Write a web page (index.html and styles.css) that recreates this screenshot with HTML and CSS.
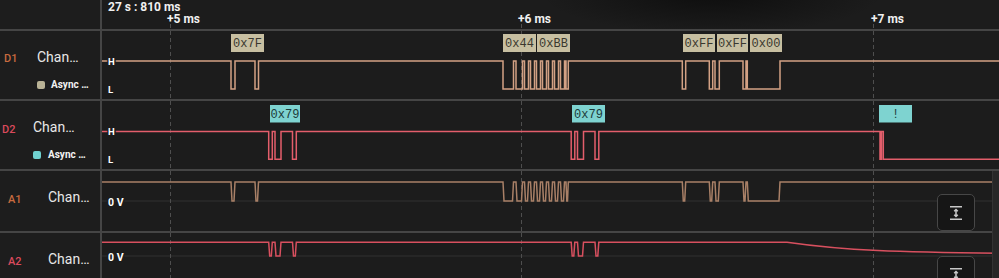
FILE: index.html
```html
<!DOCTYPE html>
<html lang="en">
<head>
  <meta charset="UTF-8" />
  <title>Logic capture</title>
  <link rel="stylesheet" href="styles.css">
</head>
<body>
  <div class="scope">

    <div class="row header">
      <div class="side"></div>
      <div class="plot">
        <svg viewBox="102 0 897 29">
          <text class="stamp" x="108" y="10.5">27 s : 810 ms</text>
          <text class="tick" x="167" y="23.3">+5 ms</text>
          <text class="tick" x="518" y="23.3">+6 ms</text>
          <text class="tick" x="871" y="23.3">+7 ms</text>
          <path class="grid" d="M170.5 24V29M521.5 24V29M873.5 24V29" />
        </svg>
      </div>
    </div>

    <div class="row digital">
      <div class="side">
        <span class="id tan">D1</span>
        <div class="name">
          <span class="title">Chan…</span>
          <span class="proto"><i class="swatch beige"></i>Async …</span>
        </div>
      </div>
      <div class="plot">
        <svg viewBox="102 0 897 68">
          <path class="grid" d="M170.5 0V68M521.5 0V68M873.5 0V68" />
          <path class="trace tan" d="M102 30H231V58H235V30H255V58H258.5V30H503V58H513.5V30H516V58H522.5V30H524.5V58H528.5V30H530.5V58H534.5V30H536.5V58H540.5V30H542.5V58H546.5V30H548.5V58H552.5V30H554.5V58H558.5V30H560.5V58H564.5V30H566V58H568.3V30H682.3V58H685.7V30H709.3V58H712.7V30H715V58H719.3V30H743V58H746V30H747.3V58H780V30H999" />
          <g class="tag">
            <rect x="231" y="3" width="33" height="18" /><text x="247.5" y="16.3">0x7F</text>
            <rect x="503" y="3" width="33" height="18" /><text x="519.5" y="16.3">0x44</text>
            <rect x="537" y="3" width="33" height="18" /><text x="553.5" y="16.3">0xBB</text>
            <rect x="683" y="3" width="32" height="18" /><text x="699" y="16.3">0xFF</text>
            <rect x="717" y="3" width="31" height="18" /><text x="732.5" y="16.3">0xFF</text>
            <rect x="750" y="3" width="32" height="18" /><text x="766" y="16.3">0x00</text>
          </g>
          <text class="level" x="108" y="33.5">H</text>
          <text class="level" x="108" y="61.5">L</text>
        </svg>
      </div>
    </div>

    <div class="row digital second">
      <div class="side">
        <span class="id pink">D2</span>
        <div class="name">
          <span class="title">Chan…</span>
          <span class="proto"><i class="swatch teal"></i>Async …</span>
        </div>
      </div>
      <div class="plot">
        <svg viewBox="102 0 897 68">
          <path class="grid" d="M170.5 0V68M521.5 0V68M873.5 0V68" />
          <path class="trace pink" d="M102 30.5H268.7V58.3H272.3V30.5H275V58.3H281V30.5H292.5V58.3H296.3V30.5H571.2V58.3H574.8V30.5H577.5V58.3H583.5V30.5H595V58.3H598.8V30.5H880V58.3H881.5V30.5H883.3V58.3H999" />
          <g class="tag teal">
            <rect x="270" y="4" width="30" height="17.5" /><text x="285" y="17">0x79</text>
            <rect x="572" y="4" width="33" height="17.5" /><text x="588.5" y="17">0x79</text>
            <rect x="879" y="4" width="33" height="17.5" /><text x="895.5" y="17">!</text>
          </g>
          <text class="level" x="108" y="33.5">H</text>
          <text class="level" x="108" y="62">L</text>
        </svg>
      </div>
    </div>

    <div class="row analog">
      <div class="side">
        <span class="id tan">A1</span>
        <div class="name"><span class="title">Chan…</span></div>
      </div>
      <div class="plot">
        <svg viewBox="102 0 897 60">
          <path class="zero" d="M102 30H999" />
          <path class="grid" d="M170.5 0V60M521.5 0V60M873.5 0V60" />
          <path class="trace brown" d="M102 11H231L232 30H234L235 11H255L256 30H257.5L258.5 11H503L504 30H512.5L513.5 11H516L517 30H521.5L522.5 11H524.5L525.5 30H527.5L528.5 11H530.5L531.5 30H533.5L534.5 11H536.5L537.5 30H539.5L540.5 11H542.5L543.5 30H545.5L546.5 11H548.5L549.5 30H551.5L552.5 11H554.5L555.5 30H557.5L558.5 11H560.5L561.5 30H563.5L564.5 11H566L566.8 30H567.5L568.3 11H682.3L683.3 30H684.7L685.7 11H709.3L710.3 30H711.7L712.7 11H715L716 30H718.3L719.3 11H743L744 30H745L746 11H747.3L748.3 30H779L780 11H999" />
          <text class="level" x="108" y="34.5">0 V</text>
        </svg>
        <button class="fit" title="Fit to height">
          <svg viewBox="0 0 12 14" width="12" height="14"><path d="M0 0.75H12M0 13.25H12M6 3.5V10.5M4.2 5.3L6 3.5L7.8 5.3M4.2 8.7L6 10.5L7.8 8.7" /></svg>
        </button>
      </div>
    </div>

    <div class="row analog">
      <div class="side">
        <span class="id pink">A2</span>
        <div class="name"><span class="title">Chan…</span></div>
      </div>
      <div class="plot">
        <svg viewBox="102 0 897 60">
          <path class="zero" d="M102 23H999" />
          <path class="grid" d="M170.5 0V60M521.5 0V60M873.5 0V60" />
          <path class="trace red" d="M102 9.3H268.7L269.7 23H271.3L272.3 9.3H275L276 23H280L281 9.3H292.5L293.5 23H295.3L296.3 9.3H571.2L572.2 23H573.8L574.8 9.3H577.5L578.5 23H582.5L583.5 9.3H595L596 23H597.8L598.8 9.3H787C847 17.9 899 19.2 999 20.3" />
          <text class="level" x="108" y="27.5">0 V</text>
        </svg>
        <button class="fit" title="Fit to height">
          <svg viewBox="0 0 12 14" width="12" height="14"><path d="M0 0.75H12M0 13.25H12M6 3.5V10.5M4.2 5.3L6 3.5L7.8 5.3M4.2 8.7L6 10.5L7.8 8.7" /></svg>
        </button>
      </div>
    </div>

  </div>
</body>
</html>
```

FILE: styles.css
```css
body {
  margin: 0;
  background-color: #1c1c1c;
  color: #e6e6e6;
  font-family: Roboto, "Liberation Sans", sans-serif;
  overflow: hidden;
}
.scope {
  width: 999px;
  height: 278px;
  overflow: hidden;
}
.row {
  display: flex;
  border-bottom: 2px solid #454545;
}
.header {
  height: 29px;
}
.digital {
  height: 68px;
}
.analog {
  height: 60px;
  position: relative;
}
.analog::after {
  content: "";
  position: absolute;
  top: 0;
  right: 0;
  bottom: -2px;
  width: 6px;
  background-color: #272727;
  border-left: 1px solid #333;
}
.side {
  width: 102px;
  flex: none;
  display: flex;
  align-items: flex-start;
  padding-left: 4px;
  box-sizing: border-box;
  border-right: 2px solid #454545;
  background-color: #1d1d1d;
}
.plot {
  flex: 1;
  position: relative;
}
.plot > svg {
  display: block;
  width: 897px;
  height: 100%;
}
.header .plot {
  background: radial-gradient(ellipse 170px 40px at 610px -6px, #0e0e0e, rgba(14, 14, 14, 0));
}
.second .plot {
  background: linear-gradient(to right, rgba(0, 0, 0, 0) 985px, #141414);
}

/* channel names */
.id {
  width: 33px;
  flex: none;
  padding-top: 21px;
  font-size: 11px;
  line-height: 14px;
  font-weight: 500;
}
.id.tan { color: #c96b3f; }
.id.pink { color: #da4a5c; }
.name {
  display: flex;
  flex-direction: column;
  gap: 14px;
  padding-top: 18px;
}
.title {
  font-size: 14px;
  line-height: 16px;
  color: #e8e8e8;
}
.proto {
  display: flex;
  align-items: center;
  font-size: 10px;
  line-height: 12px;
  font-weight: 700;
  color: #f2f2f2;
}
.swatch {
  width: 8px;
  height: 8px;
  border-radius: 2px;
  margin-right: 6px;
}
.swatch.beige { background-color: #b9b295; }
.swatch.teal { background-color: #6fd1cf; }
.second .side {
  padding-left: 2px;
}
.second .id {
  width: 31px;
  padding-top: 22px;
}
.second .swatch {
  margin-right: 7px;
}
.analog .side {
  padding-left: 8px;
}
.analog .id {
  width: 40px;
  padding-top: 22px;
}

/* plot drawing */
.stamp, .tick {
  font-family: Roboto, "Liberation Sans", sans-serif;
  font-size: 12px;
  font-weight: 700;
  fill: #f0f0f0;
}
.grid {
  fill: none;
  stroke: #4e4e4e;
  stroke-width: 1;
  stroke-dasharray: 4 3;
}
.zero {
  fill: none;
  stroke: #303030;
  stroke-width: 1;
}
.trace {
  fill: none;
  stroke-width: 1.5;
}
.trace.tan { stroke: #d3a184; }
.trace.pink { stroke: #e35e6b; }
.trace.brown { stroke: #a98067; }
.trace.red { stroke: #d8505f; }
.tag rect {
  fill: #c7bfa1;
}
.tag text {
  font-family: "Liberation Mono", "DejaVu Sans Mono", monospace;
  font-size: 12px;
  fill: #3a382f;
  text-anchor: middle;
}
.tag.teal rect {
  fill: #7ed3d0;
}
.tag.teal text {
  fill: #1d3b3a;
}
.level {
  font-family: Roboto, "Liberation Sans", sans-serif;
  font-size: 9.5px;
  font-weight: 700;
  fill: #ffffff;
  stroke: #1c1c1c;
  stroke-width: 3px;
  paint-order: stroke;
}
.analog .level {
  font-size: 10.5px;
}

/* fit-to-height button */
.fit {
  position: absolute;
  top: 23px;
  right: 24px;
  width: 38px;
  height: 37px;
  padding: 0;
  box-sizing: border-box;
  display: flex;
  align-items: center;
  justify-content: center;
  background-color: #161616;
  border: 1.5px solid #474747;
  border-radius: 5px;
}
.fit svg path {
  fill: none;
  stroke: #c8c8c8;
  stroke-width: 1.5;
}
```
